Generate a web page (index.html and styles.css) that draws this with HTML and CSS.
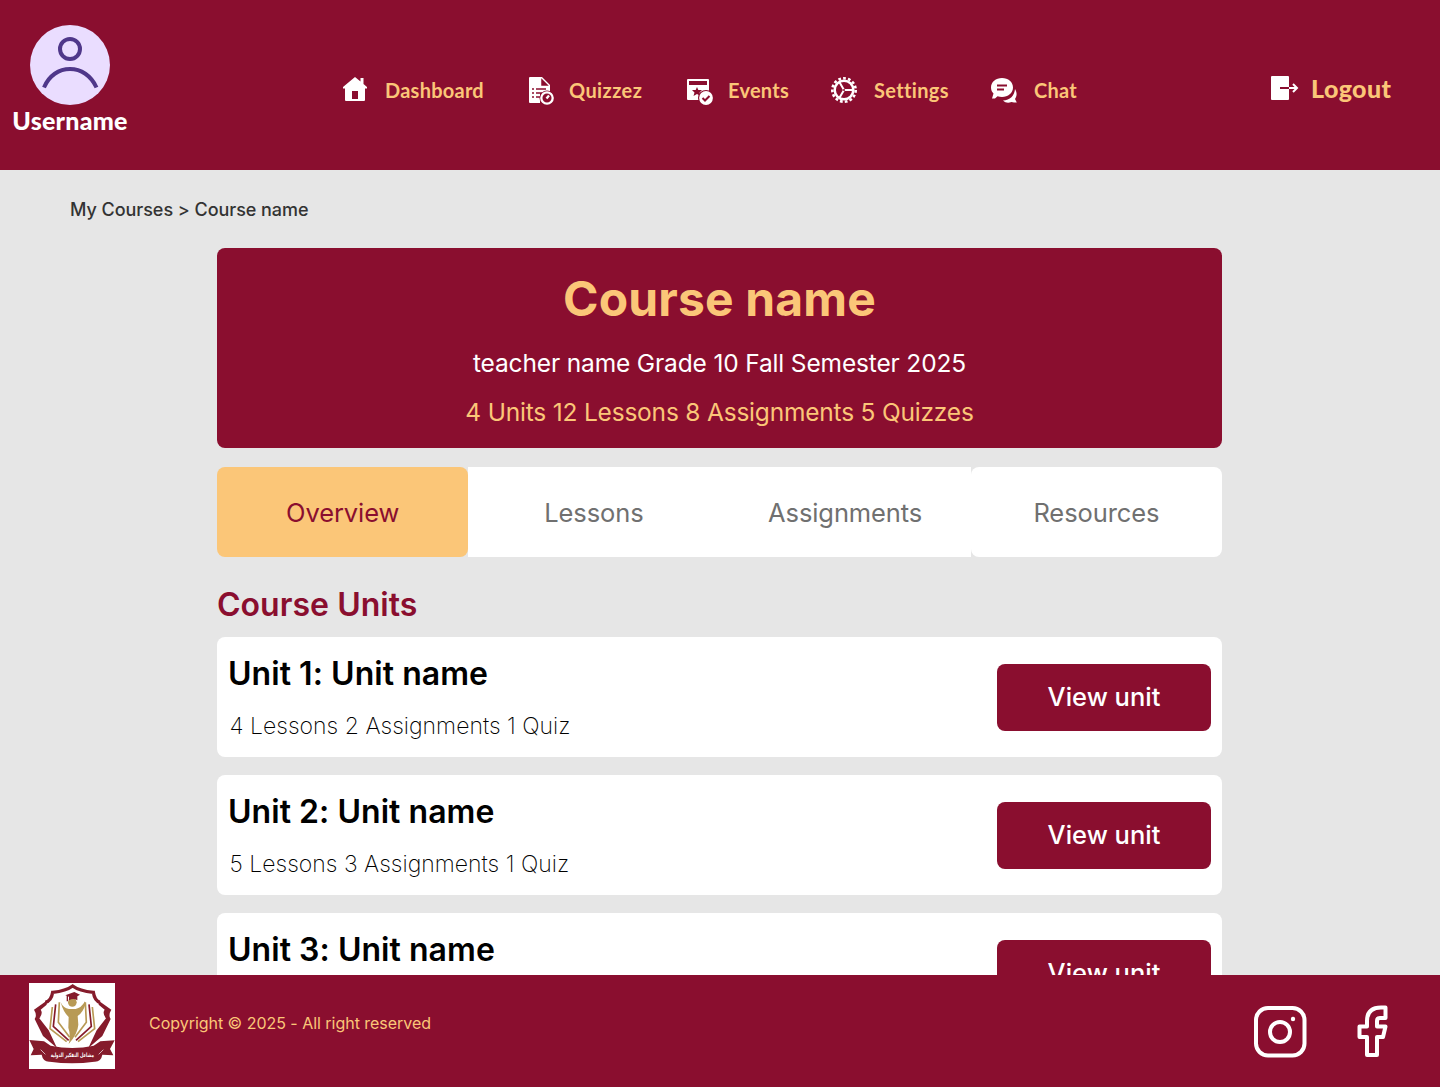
FILE: index.html
```html
<!DOCTYPE html>
<html lang="en">
<head>
<meta charset="utf-8">
<title>Course name</title>
<link rel="stylesheet" href="styles.css">
</head>
<body>
<div class="page">
<header class="header">
  <div class="profile">
    <svg class="avatar" viewBox="0 0 80 80"><circle cx="40" cy="40" r="40" fill="#eaddff"/><g fill="none" stroke="#4f378a" stroke-width="4"><circle cx="40" cy="24" r="10"/><path d="M14 62.500C19 50.500 29 44 40 44s21 6.500 26.500 18.500"/></g></svg>
    <span class="username">Username</span>
  </div>
  <nav class="nav">
    <a class="nav-item dashboard"><svg class="icon" viewBox="0 0 32 32"><path fill="#fff" fill-rule="evenodd" d="M16 3 21.500 7.500V4h3v6l3.500 3v1.500h-2V26q0 1-1 1H7q-1 0-1-1V14.500H4V13ZM13 17v8h6v-8Z"/></svg><span>Dashboard</span></a>
    <a class="nav-item quizzes"><svg class="icon" viewBox="0 0 32 32"><path fill="#fff" d="M6 3h12l8 8v8H16v10H6q-1 0-1-1V4q0-1 1-1Z"/><path d="M18 6V11H23ZM8 15h2M12 15h10M8 19h2M12 19h6M8 23h2M12 23h4" fill="#8a0e2f" stroke="#8a0e2f" stroke-width="1.500"/><circle cx="23" cy="24" r="7.500" fill="#8a0e2f"/><circle cx="23" cy="24" r="5.700" fill="none" stroke="#fff" stroke-width="2.300"/><path d="m22.500 24.500 2.500-3" fill="none" stroke="#fff" stroke-width="2.200"/></svg><span>Quizzez</span></a>
    <a class="nav-item events"><svg class="icon" viewBox="0 0 32 32"><path fill="#fff" fill-rule="evenodd" d="M4 5h20q1 0 1 1v20H4q-1 0-1-1V6q0-1 1-1Zm1 2v4h18V7Z"/><path fill="#8a0e2f" d="m13 13 1.300 3h3.700l-2.500 2.500 1 3.500-3.500-2-3.500 2 1-3.500L8 16h3.700Z"/><circle cx="22" cy="24" r="8" fill="#8a0e2f"/><circle cx="22" cy="24" r="6.900" fill="#fff"/><path d="m18.500 24 2.500 2.500 4.500-4.500" fill="none" stroke="#8a0e2f" stroke-width="2"/></svg><span>Events</span></a>
    <a class="nav-item settings"><svg class="icon" viewBox="0 0 32 32"><g fill="none" stroke="#fff"><circle cx="16" cy="16" r="11.700" stroke-width="2.600" stroke-dasharray="2.750 2.150"/><circle cx="16" cy="16" r="9.300" stroke-width="2.500"/><path stroke-width="2" d="M16 16h9M16 16l-4.500-7.800M16 16l-4.500 7.800"/></g><circle cx="16" cy="16" r="1" fill="#8a0e2f"/></svg><span>Settings</span></a>
    <a class="nav-item chat"><svg class="icon" viewBox="0 0 32 32"><path fill="#fff" d="M14 4c6.300 0 11 4 11 9.500S20 23 14 23c-1.500 0-3-.2-4.500-.8L7 24.500H4l1.500-5C4 18 3 16 3 13.500 3 8 7.800 4 14 4Z"/><path fill="#fff" d="M27 15c2 3 2.300 7 0 10l1.800 3.500H26L23.500 28c-3.500 1.200-6 .8-8.500-1.500 7 0 11.500-5 12-11.500Z"/><path stroke="#8a0e2f" stroke-width="2" d="M9 11.500h10M9 15.500h7"/></svg><span>Chat</span></a>
  </nav>
  <a class="logout"><svg class="icon" viewBox="0 0 32 32"><path fill="#fff" d="M4 4h16q1 0 1 1v22q0 1-1 1H4q-1 0-1-1V5q0-1 1-1Z"/><path d="M12 16h9" stroke="#8a0e2f" stroke-width="2"/><path d="M21 16h8M25 12l4 4-4 4" fill="none" stroke="#fff" stroke-width="2"/></svg><span>Logout</span></a>
</header>
<main class="main">
  <div class="breadcrumb">My Courses &gt; Course name</div>
  <div class="content">
    <section class="hero"><h1>Course name</h1><p class="teacher">teacher name Grade 10 Fall Semester 2025</p><p class="totals">4 Units 12 Lessons 8 Assignments 5 Quizzes</p></section>
    <div class="tabs"><a class="tab active">Overview</a><a class="tab">Lessons</a><a class="tab">Assignments</a><a class="tab last">Resources</a></div>
    <h2>Course Units</h2>
    <div class="units">
      <article class="unit"><div><h3>Unit 1: Unit name</h3><p>4 Lessons 2 Assignments 1 Quiz</p></div><a class="button">View unit</a></article>
      <article class="unit"><div><h3>Unit 2: Unit name</h3><p>5 Lessons 3 Assignments 1 Quiz</p></div><a class="button">View unit</a></article>
      <article class="unit"><div><h3>Unit 3: Unit name</h3></div><a class="button">View unit</a></article>
    </div>
  </div>
</main>
<footer class="footer">
  <svg class="logo" viewBox="27 24 258 258"><path fill="#fff" d="M27 24h258v258H27z"/>
    <path fill="none" stroke="#851b2b" stroke-width="10" d="M76 82Q94 78 98 52Q138 48 158 33Q178 48 220 52Q224 78 240 82"/>
    <path fill="#851b2b" d="M80 77 42 104q10 16 2 28l25 51 42 36-25-53-28-36q12-15 4-26l18-15ZM236 77l38 27q-10 16-2 28l-25 51-42 36 25-53 28-36q-12-15-4-26l-18-15Z"/>
    <g fill="none" stroke-width="5"><path stroke="#851b2b" d="m107 88-7 66 46 42M207 88l7 66-46 42"/><path stroke="#b89a55" d="m97 96-7 65 50 39M118 82l-3 60 34 45M217 96l7 65-50 39M196 82l3 60-34 45"/></g>
    <path fill="#b89a55" d="M122 82q8 18 25 20h20q17-3 28-23l1 10q-7 23-23 34l2 26q-2 28-29 58 7-26-1-49l1-32q-16-14-24-44Z"/><circle cx="157" cy="82" r="13" fill="#b89a55"/>
    <path fill="#851b2b" d="m136 61 27-10 17 8-8 5v12q-12-8-25 0v-11ZM140 63h4v16h-4Z"/>
    <path fill="#851b2b" d="m28 195 44 4 20 13q65 14 129 0l20-13 43-3-14 26 10 19-33-2q-4 22-24 21-67 9-134 0-20 1-24-21l-33 2 9-19Z"/>
    <path stroke="#fff" stroke-width="2" d="m62 224 14 14M250 224l-14 14"/>
    <text class="logo-text" x="157" y="247" text-anchor="middle" textLength="130" lengthAdjust="spacingAndGlyphs">مشاعل التفكير الدولية</text>
  </svg>
  <span class="copyright">Copyright © 2025 - All right reserved</span>
  <div class="social">
    <svg class="instagram" viewBox="0 0 56 56"><g fill="none" stroke="#fff" stroke-width="4"><rect x="4" y="4" width="48.500" height="47.500" rx="12"/><circle cx="28" cy="28" r="10"/></g><circle cx="41" cy="15" r="2.200" fill="#fff"/></svg>
    <svg class="facebook" viewBox="0 0 56 56"><path fill="none" stroke="#fff" stroke-width="4" stroke-linejoin="round" d="M41.500 3.500V14H36q-3 0-3 3v5.500h8.500L39 33h-6v18H23V33h-7.500V22.500H23V17Q23 3.500 37 3.500Z"/></svg>
  </div>
</footer>
</div>
</body>
</html>
```
FILE: styles.css
```css
* { box-sizing: border-box; }
body { margin: 0; font-family: Inter, sans-serif; background: #e6e6e6; }
h1, h2, h3, p { margin: 0; }
.page { width: 1440px; height: 1087px; display: flex; flex-direction: column; overflow: hidden; }
.header { height: 170px; flex: none; background: #8a0e2f; display: flex; font-family: Lato, sans-serif; color: #fbc678; }
.profile { width: 140px; padding-top: 25px; display: flex; flex-direction: column; align-items: center; }
.avatar { width: 80px; height: 80px; }
.username { color: #fff; font-size: 25px; line-height: 30px; font-weight: 900; white-space: nowrap; letter-spacing: .25px; }
.nav { display: flex; margin-left: 199px; padding-top: 73px; width: 931px; }
.nav-item { display: flex; gap: 14px; height: 34px; align-items: center; font-size: 20px; font-weight: 700; white-space: nowrap; flex: none; letter-spacing: .25px; }
.icon { width: 32px; height: 32px; flex: none; }
.dashboard { width: 185px; }
.quizzes { width: 160px; gap: 13px; letter-spacing: .4px; }
.events { width: 144px; gap: 12px; }
.settings { width: 160px; letter-spacing: .35px; }
.logout { display: flex; gap: 11px; align-items: center; height: 32px; margin-top: 72px; margin-left: -2px; font-size: 25px; font-weight: 900; letter-spacing: .4px; }
.main { height: 805px; flex: none; overflow: hidden; padding-top: 28px; }
.breadcrumb { margin-left: 70px; font-size: 18px; line-height: 24px; font-weight: 500; color: #333; letter-spacing: -.05px; }
.content { width: 1005px; margin: 25.500px 0 0 217px; }
.hero { height: 200px; background: #8a0e2f; border-radius: 8px; padding-top: 21px; text-align: center; color: #fbc678; }
.hero h1 { font-size: 48px; line-height: 60px; font-weight: 700; letter-spacing: .15px; }
.hero p { font-size: 24.500px; line-height: 30px; letter-spacing: -.15px; }
.hero .teacher { margin-top: 19px; color: #fff; }
.hero .totals { margin-top: 19px; letter-spacing: -.2px; }
.tabs { display: grid; grid-template-columns: repeat(4, 1fr); height: 90px; margin-top: 19.500px; }
.tab { display: flex; align-items: center; justify-content: center; background: #fff; color: #707070; font-size: 25.500px; padding-top: 1px; letter-spacing: -.1px; }
.tab.active { background: #fbc678; color: #8a0e2f; border-radius: 8px; }
.tab.last { border-radius: 8px; }
h2 { margin-top: 28px; font-size: 32px; line-height: 40px; font-weight: 600; color: #8a0e2f; letter-spacing: .03px; }
.units { display: flex; flex-direction: column; gap: 18px; margin-top: 12px; }
.unit { height: 120px; background: #fff; border-radius: 8px; padding: 0 11px; display: flex; justify-content: space-between; }
.unit h3 { margin-top: 17px; font-size: 32px; line-height: 40px; font-weight: 600; letter-spacing: .05px; }
.unit p { margin: 17px 0 0 1.500px; font-size: 23px; line-height: 30px; font-weight: 200; letter-spacing: .02px; }
.button { width: 214px; height: 67px; margin-top: 26.500px; padding-bottom: 1px; border-radius: 8px; background: #8a0e2f; color: #fff; font-size: 25.500px; font-weight: 500; display: flex; align-items: center; justify-content: center; }
.footer { height: 112px; flex: none; background: #8a0e2f; display: flex; align-items: flex-start; padding: 8px 40px 0 29px; }
.logo { width: 86px; height: 86px; }
.logo-text { font: 700 18px "DejaVu Sans", sans-serif; fill: #fff; }
.copyright { margin: 30px 0 0 34px; font-size: 16px; line-height: 20px; color: #fbc678; letter-spacing: -.03px; }
.social { display: flex; gap: 36px; margin: 21px 0 0 auto; }
.instagram, .facebook { width: 56px; height: 56px; }
```
